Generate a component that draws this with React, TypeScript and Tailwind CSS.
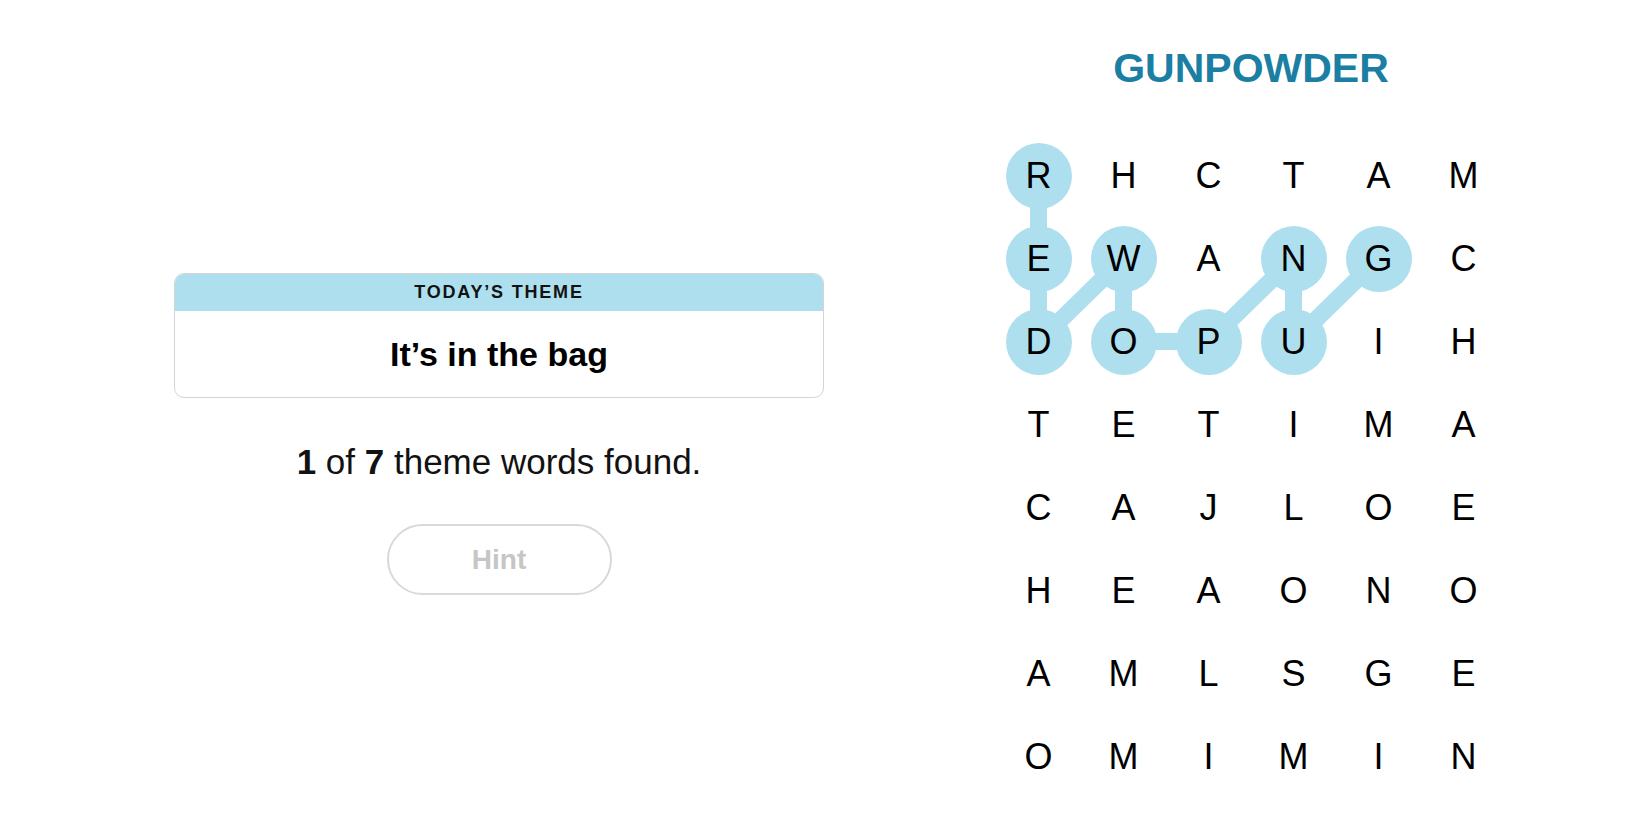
import React from "react";

const rows = [
  "RHCTAM",
  "EWANGC",
  "DOPUIH",
  "TETIMA",
  "CAJLOE",
  "HEAONO",
  "AMLSGE",
  "OMIMIN",
];

// found word, traced G -> U -> N -> P -> O -> W -> D -> E -> R
const path: [number, number][] = [
  [1, 4],
  [2, 3],
  [1, 3],
  [2, 2],
  [2, 1],
  [1, 1],
  [2, 0],
  [1, 0],
  [0, 0],
];

const CELL_W = 85;
const CELL_H = 83;

const isFound = (r: number, c: number) =>
  path.some(([pr, pc]) => pr === r && pc === c);

function ThemeCard() {
  return (
    <div className="w-[650px] overflow-hidden rounded-[10px] border border-[#d4d4d4] bg-white">
      <div className="flex h-[37px] items-center justify-center bg-[#aedfee] text-[18px] font-semibold tracking-[0.1em] text-[#121212]">
        TODAY’S THEME
      </div>
      <div className="flex h-[86px] items-center justify-center text-[34px] font-bold text-black">
        It’s in the bag
      </div>
    </div>
  );
}

function Board() {
  const pts = path.map(([r, c]) => `${c * CELL_W + CELL_W / 2},${r * CELL_H + CELL_H / 2}`).join(" ");
  return (
    <div className="relative">
      <svg
        className="absolute inset-0"
        width={CELL_W * 6}
        height={CELL_H * 8}
        viewBox={`0 0 ${CELL_W * 6} ${CELL_H * 8}`}
      >
        <polyline
          points={pts}
          fill="none"
          stroke="#aedfee"
          strokeWidth={17}
          strokeLinejoin="round"
        />
      </svg>
      <div className="relative grid grid-cols-[repeat(6,85px)] grid-rows-[repeat(8,83px)]">
        {rows.map((row, r) =>
          row.split("").map((ch, c) => (
            <div key={`${r}-${c}`} className="flex items-center justify-center">
              <span
                className={`flex h-[66px] w-[66px] items-center justify-center rounded-full text-[36px] leading-none text-black ${
                  isFound(r, c) ? "bg-[#aedfee]" : ""
                }`}
              >
                {ch}
              </span>
            </div>
          ))
        )}
      </div>
    </div>
  );
}

export default function App() {
  return (
    <div className="flex h-[825px] w-[1650px] items-start gap-[172px] bg-white pl-[174px] font-['Liberation_Sans',Arial,sans-serif] text-black">
      <div className="mt-[273px] flex flex-col items-center">
        <ThemeCard />
        <p className="mt-[46px] text-[35px] leading-none text-[#121212]">
          <span className="font-bold">1</span> of <span className="font-bold">7</span> theme words found.
        </p>
        <button
          type="button"
          disabled
          className="mt-[45px] flex h-[71px] w-[225px] items-center justify-center rounded-full border-2 border-[#d9d9d9] bg-white text-[28px] font-bold text-[#c6c6c6]"
        >
          Hint
        </button>
      </div>
      <div className="flex flex-col items-center pt-[48px]">
        <h1 className="text-[41px] font-bold leading-none text-[#1b7ea3]">GUNPOWDER</h1>
        <div className="mt-[45px]">
          <Board />
        </div>
      </div>
    </div>
  );
}
